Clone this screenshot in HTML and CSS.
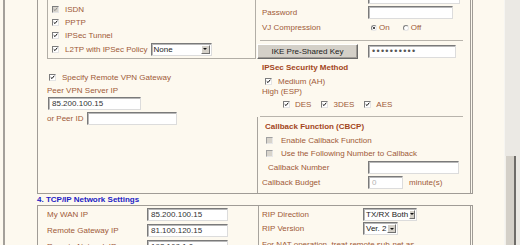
FILE: index.html
```html
<!DOCTYPE html>
<html lang="en">

<head>
    <meta charset="UTF-8">
    <title>VPN Connection Settings</title>
    <link rel="stylesheet" href="styles.css">
</head>

<body>
    <div class="window">
        <div class="frame">
            <div class="content">
                <!-- 3. VPN connection -->
                <div class="panel panel-vpn">
                    <div class="col col-left">
                        <div class="fieldset">
                            <div class="row opt"><span class="cb on dis"><svg viewBox="0 0 7 7"><path d="M1 3.2l1.8 1.8 3.2-4"/></svg></span>ISDN</div>
                            <div class="row opt"><span class="cb on"><svg viewBox="0 0 7 7"><path d="M1 3.2l1.8 1.8 3.2-4"/></svg></span>PPTP</div>
                            <div class="row opt"><span class="cb on"><svg viewBox="0 0 7 7"><path d="M1 3.2l1.8 1.8 3.2-4"/></svg></span>IPSec Tunnel</div>
                            <div class="row opt opt-last"><span class="cb on"><svg viewBox="0 0 7 7"><path d="M1 3.2l1.8 1.8 3.2-4"/></svg></span>L2TP with IPSec Policy
                                <span class="select sel-policy"><span class="sel-text">None</span><span class="sel-btn"></span></span>
                            </div>
                        </div>
                        <div class="row gateway"><span class="cb on"><svg viewBox="0 0 7 7"><path d="M1 3.2l1.8 1.8 3.2-4"/></svg></span>Specify Remote VPN Gateway</div>
                        <div class="row peer-label">Peer VPN Server IP</div>
                        <div class="row peer-ip"><span class="field f-peer">85.200.100.15</span></div>
                        <div class="row peer-id">or Peer ID <span class="field f-peerid"></span></div>
                    </div>

                    <div class="col col-right">
                        <div class="row line first"><span class="key"></span><span class="field f-user"></span></div>
                        <div class="row line"><span class="key">Password</span><span class="field f-pass"></span></div>
                        <div class="row line"><span class="key">VJ Compression</span>
                            <span class="radio on"></span><span class="radio-text">On</span>
                            <span class="radio"></span><span class="radio-text">Off</span>
                        </div>
                        <div class="sep"></div>
                        <div class="row key-row">
                            <span class="button">IKE Pre-Shared Key</span>
                            <span class="field f-psk">••••••••••</span>
                        </div>
                        <div class="row title-row"><span class="title">IPSec Security Method</span></div>
                        <div class="row medium"><span class="cb on"><svg viewBox="0 0 7 7"><path d="M1 3.2l1.8 1.8 3.2-4"/></svg></span>Medium (AH)</div>
                        <div class="row high">High (ESP)</div>
                        <div class="row ciphers">
                            <span class="cipher"><span class="cb on"><svg viewBox="0 0 7 7"><path d="M1 3.2l1.8 1.8 3.2-4"/></svg></span>DES</span>
                            <span class="cipher"><span class="cb on"><svg viewBox="0 0 7 7"><path d="M1 3.2l1.8 1.8 3.2-4"/></svg></span>3DES</span>
                            <span class="cipher"><span class="cb on"><svg viewBox="0 0 7 7"><path d="M1 3.2l1.8 1.8 3.2-4"/></svg></span>AES</span>
                        </div>
                        <div class="sep sep-low"></div>
                        <div class="callback">
                            <div class="row cb-title"><span class="title">Callback Function (CBCP)</span></div>
                            <div class="row cb-opt"><span class="cb dis"></span>Enable Callback Function</div>
                            <div class="row cb-opt cb-opt2"><span class="cb dis"></span>Use the Following Number to Callback</div>
                            <div class="row cb-number"><span class="key">Callback Number</span><span class="field f-cbnum"></span></div>
                            <div class="row cb-budget"><span class="key">Callback Budget</span><span class="field f-budget">0</span><span class="unit">minute(s)</span></div>
                        </div>
                    </div>
                </div>

                <!-- 4. TCP/IP -->
                <div class="section-title">4. TCP/IP Network Settings</div>
                <div class="panel panel-tcp">
                    <div class="col col-left tcp-left">
                        <div class="row tcp-row"><span class="key">My WAN IP</span><span class="field f-ip">85.200.100.15</span></div>
                        <div class="row tcp-row"><span class="key">Remote Gateway IP</span><span class="field f-ip">81.100.120.15</span></div>
                        <div class="row tcp-row"><span class="key">Remote Network IP</span><span class="field f-ip">192.168.1.0</span></div>
                    </div>
                    <div class="col tcp-right">
                        <div class="row rip-row"><span class="key">RIP Direction</span>
                            <span class="select sel-dir"><span class="sel-text">TX/RX Both</span><span class="sel-btn"></span></span>
                        </div>
                        <div class="row rip-row rip-ver"><span class="key">RIP Version</span>
                            <span class="select sel-ver"><span class="sel-text">Ver. 2</span><span class="sel-btn"></span></span>
                        </div>
                        <div class="row nat-row">For NAT operation, treat remote sub-net as</div>
                    </div>
                </div>
            </div>
        </div>
        <div class="scrollbar">
            <div class="thumb"></div>
        </div>
    </div>
</body>

</html>
```

FILE: styles.css
```css
body {
    margin: 0;
    background-color: #fdf9ef;
    font-family: "Liberation Sans", Arial, sans-serif;
    font-size: 8px;
    color: #a05a38;
    overflow: hidden;
}

.window {
    display: flex;
    height: 245px;
    overflow: hidden;
}

.frame {
    flex: 1;
    margin-left: 3px;
    border-left: 2px solid #a4a09a;
}

.content {
    width: 436px;
    margin-top: -16px;
    margin-left: 32px;
}

.panel {
    display: grid;
    border: 1px solid #a09c96;
    border-right: 3px double #a09c96;
}

.panel-vpn {
    grid-template-columns: 219px 213px;
}

.panel-tcp {
    grid-template-columns: 221px 1fr;
    border-bottom: none;
}

.row {
    display: flex;
    align-items: center;
    white-space: nowrap;
}

/* checkboxes, radios, fields */

.cb {
    width: 7px;
    height: 7px;
    box-sizing: border-box;
    border: 1px solid;
    border-color: #7c7c7c #e4e4e4 #e4e4e4 #7c7c7c;
    background-color: #fff;
    margin-right: 6px;
    flex-shrink: 0;
    display: flex;
}

.cb svg {
    width: 5px;
    height: 5px;
    fill: none;
    stroke: #111;
    stroke-width: 1.4;
}

.cb.dis {
    background-color: #d8d4cc;
}

.cb.dis svg {
    stroke: #8a8a8a;
}

.radio {
    width: 6px;
    height: 6px;
    box-sizing: border-box;
    border-radius: 50%;
    border: 1px solid;
    border-color: #808080 #e6e6e6 #e6e6e6 #808080;
    background-color: #fff;
    display: flex;
    align-items: center;
    justify-content: center;
    margin-left: 3px;
    margin-right: 2px;
}

.radio.on::before {
    content: '';
    width: 2px;
    height: 2px;
    border-radius: 50%;
    background-color: #111;
}

.radio-text {
    margin-right: 10px;
}

.field {
    height: 13px;
    box-sizing: border-box;
    border: 1px solid;
    border-color: #7a7a7a #dcdcdc #dcdcdc #7a7a7a;
    box-shadow: inset 1px 1px 0 #b8b8b8;
    background-color: #fff;
    color: #333;
    padding-left: 3px;
    line-height: 11px;
    display: inline-block;
}

.select {
    height: 13px;
    box-sizing: border-box;
    display: inline-flex;
    align-items: stretch;
    border: 1px solid;
    border-color: #7a7a7a #dcdcdc #dcdcdc #7a7a7a;
    box-shadow: inset 1px 1px 0 #b8b8b8;
    background-color: #fff;
    color: #222;
}

.sel-text {
    flex: 1;
    padding-left: 2px;
    line-height: 11px;
}

.sel-btn {
    width: 9px;
    margin: 1px;
    box-sizing: border-box;
    background-color: #d4d0c8;
    border: 1px solid;
    border-color: #fff #707070 #707070 #fff;
    display: flex;
    align-items: center;
    justify-content: center;
}

.sel-btn::before {
    content: '';
    border-left: 2px solid transparent;
    border-right: 2px solid transparent;
    border-top: 2px solid #111;
}

.title {
    font-weight: bold;
    color: #a3461c;
}

.key {
    width: 106px;
    flex-shrink: 0;
}

/* left column of the VPN panel */

.col-left {
    padding-left: 9px;
}

.fieldset {
    margin-right: 1px;
    border: 1px solid #b2aea6;
    padding: 17px 0 2px 4px;
}

.opt {
    height: 13px;
}

.opt-last {
    height: 14px;
}

.sel-policy {
    width: 61px;
    margin-left: 3px;
}

.gateway {
    height: 14px;
    margin-top: 11px;
    padding-left: 2px;
}

.peer-label {
    height: 12px;
}

.peer-ip {
    margin-top: 1px;
    padding-left: 1px;
}

.f-peer {
    width: 93px;
}

.peer-id {
    height: 13px;
    margin-top: 2px;
}

.f-peerid {
    width: 90px;
    margin-left: 4px;
}

/* right column of the VPN panel */

.line {
    height: 15px;
    padding-left: 5px;
}

.line.first {
    margin-top: 5px;
}

.f-user {
    width: 92px;
}

.f-pass {
    width: 85px;
}

.sep {
    height: 1px;
    background-color: #b8b4ac;
    margin: 5px 7px 0 3px;
}

.key-row {
    margin-top: 3px;
    height: 15px;
}

.button {
    width: 101px;
    height: 15px;
    box-sizing: border-box;
    background-color: #d4d0c8;
    border: 1px solid;
    border-color: #fff #6a6a6a #6a6a6a #fff;
    box-shadow: inset -1px -1px 0 #a09c96;
    color: #222;
    text-align: center;
    line-height: 13px;
}

.f-psk {
    width: 88px;
    margin-left: 10px;
    font-size: 9px;
    letter-spacing: 1.3px;
    line-height: 10px;
    color: #555;
}

.title-row {
    height: 15px;
    margin-top: 1px;
    padding-left: 5px;
}

.medium {
    height: 12px;
    padding-left: 8px;
}

.high {
    height: 9px;
    padding-left: 5px;
}

.ciphers {
    height: 14px;
    margin-top: 1px;
    padding-left: 26px;
}

.cipher {
    display: flex;
    align-items: center;
    margin-right: 10px;
}

.cipher .cb {
    margin-right: 5px;
}

.sep-low {
    margin-top: 5px;
}

.callback {
    border-left: 1px solid #a8a49e;
    padding: 2px 0 4px;
}

.cb-title {
    height: 14px;
    padding-left: 7px;
}

.cb-opt {
    height: 14px;
    padding-left: 8px;
}

.cb-opt .cb {
    margin-right: 8px;
    border-color: #a0a0a0 #e8e8e8 #e8e8e8 #a0a0a0;
}

.cb-opt2 {
    height: 13px;
}

.cb-number {
    height: 14px;
    padding-left: 10px;
}

.cb-number .key {
    width: 100px;
}

.f-cbnum {
    width: 91px;
}

.cb-budget {
    height: 14px;
    margin-top: 1px;
    padding-left: 4px;
}

.f-budget {
    width: 35px;
    color: #b4b4b4;
}

.unit {
    margin-left: 6px;
}

/* 4. TCP/IP */

.section-title {
    height: 11px;
    line-height: 11px;
    font-weight: bold;
    color: #2222c4;
}

.tcp-left {
    border-right: 1px solid #a8a49e;
    padding-left: 9px;
}

.tcp-row {
    height: 15px;
    margin-top: 1px;
}

.tcp-left .key {
    width: 100px;
}

.f-ip {
    width: 81px;
}

.tcp-right {
    padding-left: 3px;
}

.rip-row {
    height: 14px;
    margin-top: 1px;
}

.rip-ver {
    height: 15px;
    margin-top: 0;
}

.rip-row .key {
    width: 101px;
}

.sel-dir {
    width: 54px;
}

.sel-ver {
    width: 35px;
}

.nat-row {
    height: 16px;
}

/* scrollbar */

.scrollbar {
    width: 15px;
    background-color: #ebe9e4;
    border-left: 1px solid #f6f5f1;
}

.thumb {
    margin-top: 156px;
    width: 11px;
    height: 120px;
    box-sizing: border-box;
    background-color: #d4d0c8;
    border-left: 1px solid #f2f0ea;
    border-right: 2px solid #6e6c68;
}
```
